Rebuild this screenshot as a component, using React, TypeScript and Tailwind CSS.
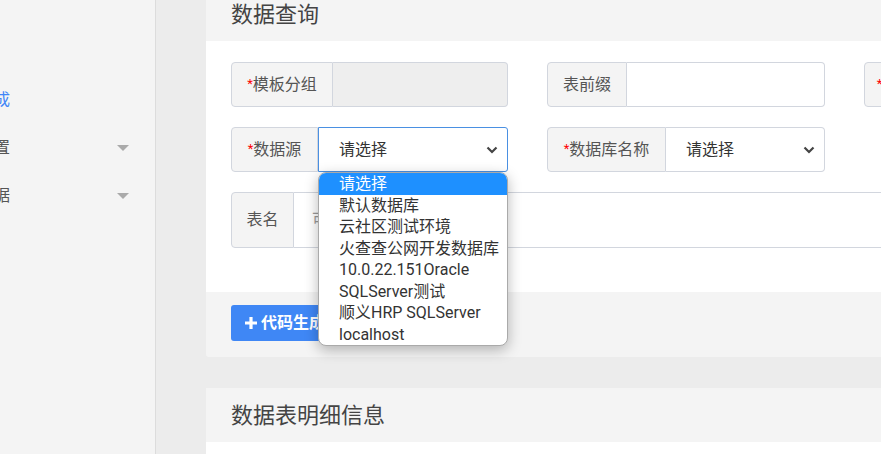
import React from "react";

const dbOptions = [
  "请选择",
  "默认数据库",
  "云社区测试环境",
  "火查查公网开发数据库",
  "10.0.22.151Oracle",
  "SQLServer测试",
  "顺义HRP SQLServer",
  "localhost",
];

const menuItems = [
  { label: "代码生成", active: true, caret: false },
  { label: "系统设置", active: false, caret: true },
  { label: "基础数据", active: false, caret: true },
];

// 下拉箭头
const Chevron = () => (
  <svg width="12" height="8" viewBox="0 0 12 8" className="shrink-0">
    <path d="M1.5 1.5 L6 6 L10.5 1.5" fill="none" stroke="#444" strokeWidth="2.2" />
  </svg>
);

const Caret = () => (
  <svg width="12" height="6" viewBox="0 0 12 6">
    <polygon points="0,0 12,0 6,6" fill="#aaa" />
  </svg>
);

const Label = ({
  text,
  required,
  width,
}: {
  text: string;
  required?: boolean;
  width: string;
}) => (
  <div
    className={`${width} shrink-0 flex items-center justify-center bg-[#f4f4f4] border border-[#d2d6de] rounded-l-[4px] text-[16px] text-[#555] whitespace-nowrap`}
  >
    {required && <span className="text-[#f00] text-[13px] -mt-[2px]">*</span>}
    {text}
  </div>
);

export default function App() {
  return (
    <div
      className="w-[881px] h-[454px] overflow-hidden flex bg-[#ececec] text-[#333]"
      style={{ fontFamily: '"Roboto", "Noto Sans CJK SC", sans-serif' }}
    >
      {/* 左侧菜单 */}
      <div className="w-[156px] shrink-0 bg-[#f4f4f4] border-r border-[#dcdcdc] pt-[76px]">
        {menuItems.map((item) => (
          <div key={item.label} className="h-[48px] flex items-center pr-[26px]">
            <span
              className={`-ml-[54px] text-[16px] whitespace-nowrap ${
                item.active ? "text-[#3f86f7]" : "text-[#555]"
              }`}
            >
              {item.label}
            </span>
            <span className="flex-1" />
            {item.caret && <Caret />}
          </div>
        ))}
      </div>

      {/* 主内容 */}
      <div className="flex-1 pl-[50px] min-w-0">
        <div className="w-[900px]">
          {/* 数据查询 */}
          <div className="-mt-[12px]">
            <div className="h-[53px] bg-[#f4f4f4] px-[25px] flex items-center text-[22px] text-[#444]">
              数据查询
            </div>
            <div className="bg-white px-[25px] pt-[21px] pb-[44px] flex flex-col gap-[20px]">
              <div className="grid grid-cols-[277px_278px_278px] gap-x-[39px]">
                <div className="flex h-[45px]">
                  <Label text="模板分组" required width="w-[102px]" />
                  <div className="flex-1 bg-[#eee] border border-l-0 border-[#d2d6de] rounded-r-[4px]" />
                </div>
                <div className="flex h-[45px]">
                  <Label text="表前缀" width="w-[80px]" />
                  <div className="flex-1 bg-white border border-l-0 border-[#d2d6de] rounded-r-[4px]" />
                </div>
                <div className="flex h-[45px]">
                  <Label text="表名称" required width="w-[79px]" />
                  <div className="flex-1 bg-white border border-l-0 border-[#d2d6de] rounded-r-[4px]" />
                </div>
              </div>

              <div className="grid grid-cols-[277px_278px_278px] gap-x-[39px]">
                <div className="flex h-[45px]">
                  <Label text="数据源" required width="w-[87px]" />
                  <div className="relative flex-1">
                    <div className="h-full flex items-center justify-between pl-[20px] pr-[9px] bg-white border border-[#4a90e2] rounded-r-[3px] text-[16px]">
                      请选择
                      <Chevron />
                    </div>
                    {/* 展开的选项列表 */}
                    <div className="absolute left-0 top-full w-full z-10 bg-white rounded-[8px] overflow-hidden border border-[#aaa] shadow-[0_4px_14px_rgba(0,0,0,0.28)]">
                      {dbOptions.map((opt, i) => (
                        <div
                          key={opt}
                          className={`h-[21.5px] leading-[21.5px] pl-[20px] text-[16px] whitespace-nowrap ${
                            i === 0 ? "bg-[#1e90ff] text-white" : "text-[#333]"
                          }`}
                        >
                          {opt}
                        </div>
                      ))}
                    </div>
                  </div>
                </div>
                <div className="flex h-[45px]">
                  <Label text="数据库名称" required width="w-[119px]" />
                  <div className="flex-1 flex items-center justify-between pl-[20px] pr-[9px] bg-white border border-l-0 border-[#d2d6de] rounded-r-[4px] text-[16px]">
                    请选择
                    <Chevron />
                  </div>
                </div>
              </div>

              <div className="flex h-[56px]">
                <Label text="表名" width="w-[63px]" />
                <div className="flex-1 flex items-center pl-[18px] bg-white border border-l-0 border-[#d2d6de] rounded-r-[4px] text-[16px] text-[#999]">
                  可输入多个表名
                </div>
              </div>
            </div>
            <div className="h-[65px] bg-[#f4f4f4] px-[25px] pt-[13px] rounded-b-[3px]">
              <button className="h-[36px] px-[14px] flex items-center gap-[4px] bg-[#3f87f5] rounded-[3px] text-white text-[16px] font-bold">
                <svg width="12" height="12" viewBox="0 0 12 12">
                  <path d="M6 0 V12 M0 6 H12" stroke="#fff" strokeWidth="3.2" />
                </svg>
                代码生成
              </button>
            </div>
          </div>

          {/* 数据表明细信息 */}
          <div className="mt-[31px]">
            <div className="h-[54px] bg-[#f4f4f4] px-[25px] flex items-center text-[22px] text-[#444]">
              数据表明细信息
            </div>
            <div className="h-[60px] bg-white" />
          </div>
        </div>
      </div>
    </div>
  );
}
